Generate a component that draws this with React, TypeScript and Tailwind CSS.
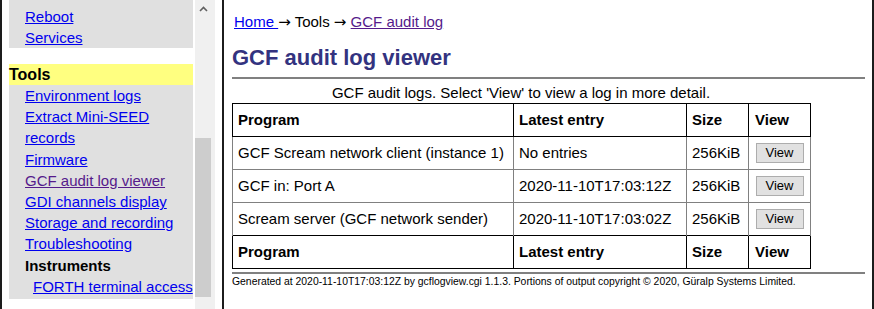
const navLinks = [
  { label: 'Environment logs' },
  { label: 'Extract Mini-SEED', cont: true },
  { label: 'records' },
  { label: 'Firmware' },
  { label: 'GCF audit log viewer', visited: true },
  { label: 'GDI channels display' },
  { label: 'Storage and recording' },
  { label: 'Troubleshooting' },
];

const logs = [
  { program: 'GCF Scream network client (instance 1)', latest: 'No entries', size: '256KiB' },
  { program: 'GCF in: Port A', latest: '2020-11-10T17:03:12Z', size: '256KiB' },
  { program: 'Scream server (GCF network sender)', latest: '2020-11-10T17:03:02Z', size: '256KiB' },
];

const HeaderRow = () => (
  <tr>
    <th className="border border-black text-left px-[5px] h-[33px] font-bold">Program</th>
    <th className="border border-black text-left px-[5px] font-bold">Latest entry</th>
    <th className="border border-black text-left px-[5px] font-bold">Size</th>
    <th className="border border-black text-left px-[6px] font-bold">View</th>
  </tr>
);

const Arrow = () => <span style={{ fontFamily: '"DejaVu Sans", sans-serif' }}>→</span>;

export default function App() {
  return (
    <div
      className="flex h-[309px] w-[874px] overflow-hidden bg-white text-black"
      style={{ fontFamily: '"Liberation Sans", Arial, sans-serif' }}
    >
      {/* left frame */}
      <div className="flex h-full w-[224px] shrink-0 border-l-2 border-r-2 border-[#1c1c1c]">
        <div className="w-[191px] shrink-0 pl-[7px]">
          <div className="w-[184px] bg-[#e0e0e0] pt-[6px] pl-[16px] text-[15px] leading-[21px]">
            <a href="#" className="block text-[#0000ee] underline">Reboot</a>
            <a href="#" className="block text-[#0000ee] underline">Services</a>
          </div>
          <div className="mt-[16px] w-[184px] bg-[#ffff80] text-[16px] font-bold leading-[21px]">Tools</div>
          <div className="w-[184px] bg-[#e0e0e0] pb-[2px] pl-[16px] text-[15px] leading-[21.2px] whitespace-nowrap">
            {navLinks.map((l) => (
              <a
                key={l.label}
                href="#"
                className={`block underline ${l.visited ? 'text-[#551a8b]' : 'text-[#0000ee]'}`}
              >
                {l.label}
              </a>
            ))}
            <div className="font-bold">Instruments</div>
            <a href="#" className="block pl-[8px] text-[#0000ee] underline">FORTH terminal access</a>
          </div>
        </div>
        {/* scrollbar */}
        <div className="ml-[2px] flex w-[20px] shrink-0 flex-col bg-[#f0f0f0]">
          <div className="flex h-[17px] w-[16px] items-center justify-center">
            <svg width="9" height="6" viewBox="0 0 9 6">
              <path d="M1 5 L4.5 1.5 L8 5" fill="none" stroke="#606060" strokeWidth="1.6" />
            </svg>
          </div>
          <div className="mt-[121px] h-[159px] w-[16px] bg-[#cdcdcd]" />
        </div>
      </div>

      {/* right frame */}
      <div className="h-full w-[650px] shrink-0 border-r-2 border-[#1c1c1c] pl-[8px] pr-[7px]">
        <div className="mt-[13px] pl-[2px] text-[15px] leading-[18px]">
          <a href="#" className="text-[#0000ee] underline">Home </a>
          <Arrow /> Tools <Arrow />{' '}
          <a href="#" className="text-[#551a8b] underline">GCF audit log</a>
        </div>
        <h1 className="mt-[14px] text-[22px] font-bold leading-[26px] text-[#333380]">GCF audit log viewer</h1>
        <div className="mt-[6px] border-t-2 border-[#808080]" />

        <div className="mt-[5px] w-[578px] text-center text-[15px] leading-[18px]">
          GCF audit logs. Select 'View' to view a log in more detail.
        </div>
        <table className="mt-[1px] w-[578px] table-fixed border-collapse text-[15px] leading-[18px]">
          <colgroup>
            <col className="w-[281px]" />
            <col className="w-[173px]" />
            <col className="w-[62px]" />
            <col className="w-[62px]" />
          </colgroup>
          <thead>
            <HeaderRow />
          </thead>
          <tbody>
            {logs.map((r, i) => {
              const b = i < logs.length - 1 ? 'border-x border-b border-[#808080]' : 'border-x border-[#808080]';
              return (
                <tr key={r.program}>
                  <td className={`${b} h-[33px] px-[5px] whitespace-nowrap`}>{r.program}</td>
                  <td className={`${b} px-[5px] whitespace-nowrap`}>{r.latest}</td>
                  <td className={`${b} px-[5px]`}>{r.size}</td>
                  <td className={`${b} text-center`}>
                    <button className="h-[20px] w-[48px] border border-[#adadad] bg-[#e1e1e1] text-[13px] leading-[16px] text-black">
                      View
                    </button>
                  </td>
                </tr>
              );
            })}
          </tbody>
          <tfoot>
            <HeaderRow />
          </tfoot>
        </table>

        <div className="mt-[3px] border-t-2 border-[#808080]" />
        <div className="mt-[1px] text-[10.4px] leading-[13px] whitespace-nowrap">
          Generated at 2020-11-10T17:03:12Z by gcflogview.cgi 1.1.3. Portions of output copyright © 2020, Güralp Systems Limited.
        </div>
      </div>
    </div>
  );
}
